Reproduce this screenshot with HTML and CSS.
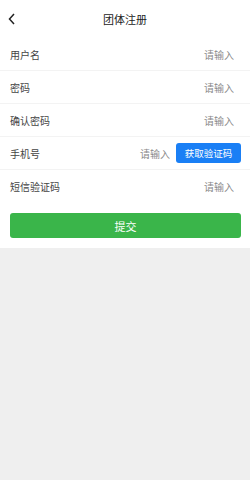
FILE: index.html
```html
<!DOCTYPE html>
<html lang="zh">
<head>
<meta charset="utf-8">
<link rel="stylesheet" href="styles.css">
</head>
<body>
<div class="page">
  <header class="header">
    <span class="back"><svg width="8" height="12" viewBox="0 0 8 12"><polyline points="6,1 1.5,6 6,11" fill="none" stroke="#222" stroke-width="1.5" stroke-linejoin="miter"/></svg></span>
    <h1 class="title">团体注册</h1>
  </header>
  <form class="form">
    <div class="row"><label class="label">用户名</label><input class="input" placeholder="请输入"></div>
    <div class="row"><label class="label">密码</label><input class="input" type="password" placeholder="请输入"></div>
    <div class="row"><label class="label">确认密码</label><input class="input" type="password" placeholder="请输入"></div>
    <div class="row row-code"><label class="label">手机号</label><input class="input" placeholder="请输入"><button type="button" class="code-btn">获取验证码</button></div>
    <div class="row row-last"><label class="label">短信验证码</label><input class="input" placeholder="请输入"></div>
    <div class="submit-wrap"><button type="button" class="submit">提交</button></div>
  </form>
</div>
</body>
</html>
```
FILE: styles.css
```css
html, body {
  margin: 0;
  padding: 0;
  background: #efefef;
  font-family: "Noto Sans CJK SC", "Noto Sans", sans-serif;
}
.page {
  width: 250px;
}
.header {
  height: 38px;
  background: #fff;
  display: flex;
  align-items: center;
  justify-content: center;
  position: relative;
}
.back {
  position: absolute;
  left: 8px;
  top: 13px;
  display: flex;
}
.title {
  margin: 0;
  font-size: 11px;
  font-weight: 400;
  color: #222;
}
.form {
  background: #fff;
  margin: 0;
}
.row {
  height: 32px;
  border-bottom: 1px solid #f3f3f3;
  display: flex;
  align-items: center;
  padding: 0 9px 0 10px;
}
.row-last {
  border-bottom: none;
  height: 33px;
}
.label {
  font-size: 10px;
  color: #444;
  white-space: nowrap;
}
.input {
  flex: 1;
  min-width: 0;
  border: none;
  outline: none;
  background: transparent;
  text-align: right;
  font-family: inherit;
  font-size: 10px;
  color: #333;
  padding: 0 7px 0 0;
  margin: 0;
}
.input::placeholder {
  color: #8a8a8a;
}
.row-code .input {
  padding-right: 6px;
}
.code-btn {
  width: 65px;
  height: 20px;
  border: none;
  border-radius: 3px;
  background: #1a7ff5;
  color: #fff;
  font-family: inherit;
  font-size: 9.5px;
  padding: 0;
  margin: 0;
}
.submit-wrap {
  padding: 10px 9px 10px 10px;
}
.submit {
  display: block;
  width: 100%;
  height: 25px;
  border: none;
  border-radius: 3px;
  background: #3ab54a;
  color: #fff;
  font-family: inherit;
  font-size: 11px;
  padding: 0;
}
```
